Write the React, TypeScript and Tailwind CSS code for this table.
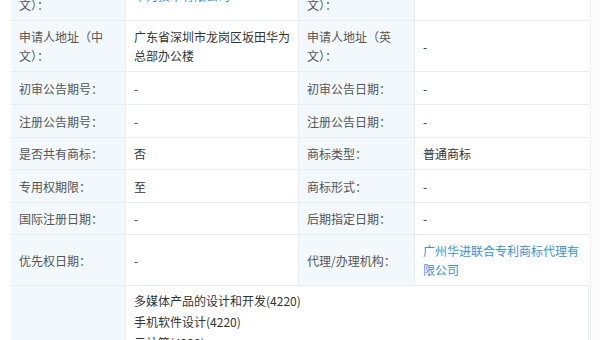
import React from "react";

const font = { fontFamily: '"Microsoft YaHei", "Noto Sans CJK SC", "Noto Sans", sans-serif' };

type Row = {
  h: string;
  l1: React.ReactNode;
  v1: React.ReactNode;
  l2: React.ReactNode;
  v2: React.ReactNode;
};

const L = "bg-[#f2f8fc] border-r border-b border-[#e6edf2] pl-[8px] pr-[6px] flex items-center text-[#555] leading-[19px]";
const V = "bg-white border-r border-b border-[#e6edf2] pl-[8px] pr-[6px] flex items-center text-[#333] leading-[19px]";

const rows: Row[] = [
  {
    h: "h-[51px]",
    l1: <>申请人名称（中<br />文）：</>,
    v1: <span className="text-[#3d8ee2]">华为技术有限公司</span>,
    l2: <>申请人名称（英<br />文）：</>,
    v2: "",
  },
  {
    h: "h-[51px]",
    l1: <>申请人地址（中<br />文）：</>,
    v1: <>广东省深圳市龙岗区坂田华为<br />总部办公楼</>,
    l2: <>申请人地址（英<br />文）：</>,
    v2: "-",
  },
  { h: "h-[33px]", l1: "初审公告期号：", v1: "-", l2: "初审公告日期：", v2: "-" },
  { h: "h-[33px]", l1: "注册公告期号：", v1: "-", l2: "注册公告日期：", v2: "-" },
  { h: "h-[32px]", l1: "是否共有商标：", v1: "否", l2: "商标类型：", v2: "普通商标" },
  { h: "h-[33px]", l1: "专用权期限：", v1: "至", l2: "商标形式：", v2: "-" },
  { h: "h-[32px]", l1: "国际注册日期：", v1: "-", l2: "后期指定日期：", v2: "-" },
  {
    h: "h-[51px]",
    l1: "优先权日期：",
    v1: "-",
    l2: "代理/办理机构：",
    v2: <span className="text-[#3d8ee2]">广州华进联合专利商标代理有<br />限公司</span>,
  },
];

export default function App() {
  return (
    <div className="w-[600px] h-[340px] overflow-hidden bg-white text-[12px]" style={font}>
      <div className="flex h-full">
        <div className="ml-[11px] w-[578px] mt-[-30px] border-r border-[#e6edf2]">
          <div className="grid grid-cols-[115px_173px_116px_174px]">
            {rows.map((r, i) => (
              <React.Fragment key={i}>
                <div className={`${L} ${r.h}`}>
                  <div>{r.l1}</div>
                </div>
                <div className={`${V} ${r.h}`}>
                  <div>{r.v1}</div>
                </div>
                <div className={`${L} ${r.h}`}>
                  <div>{r.l2}</div>
                </div>
                <div className={`${V} ${r.h} border-r-0`}>
                  <div>{r.v2}</div>
                </div>
              </React.Fragment>
            ))}
          </div>
          <div className="flex h-[100px]">
            <div className="w-[115px] bg-[#f2f8fc] border-r border-[#e6edf2]" />
            <div className="flex-1 pl-[8px] pt-[4px] text-[#333] leading-[21px]">
              <div>多媒体产品的设计和开发(4220)</div>
              <div>手机软件设计(4220)</div>
              <div>云计算(4220)</div>
            </div>
          </div>
        </div>
        <div className="flex-1 bg-[#fcfcfc] border-l border-[#f0f0f0] ml-[1px]" />
      </div>
    </div>
  );
}
